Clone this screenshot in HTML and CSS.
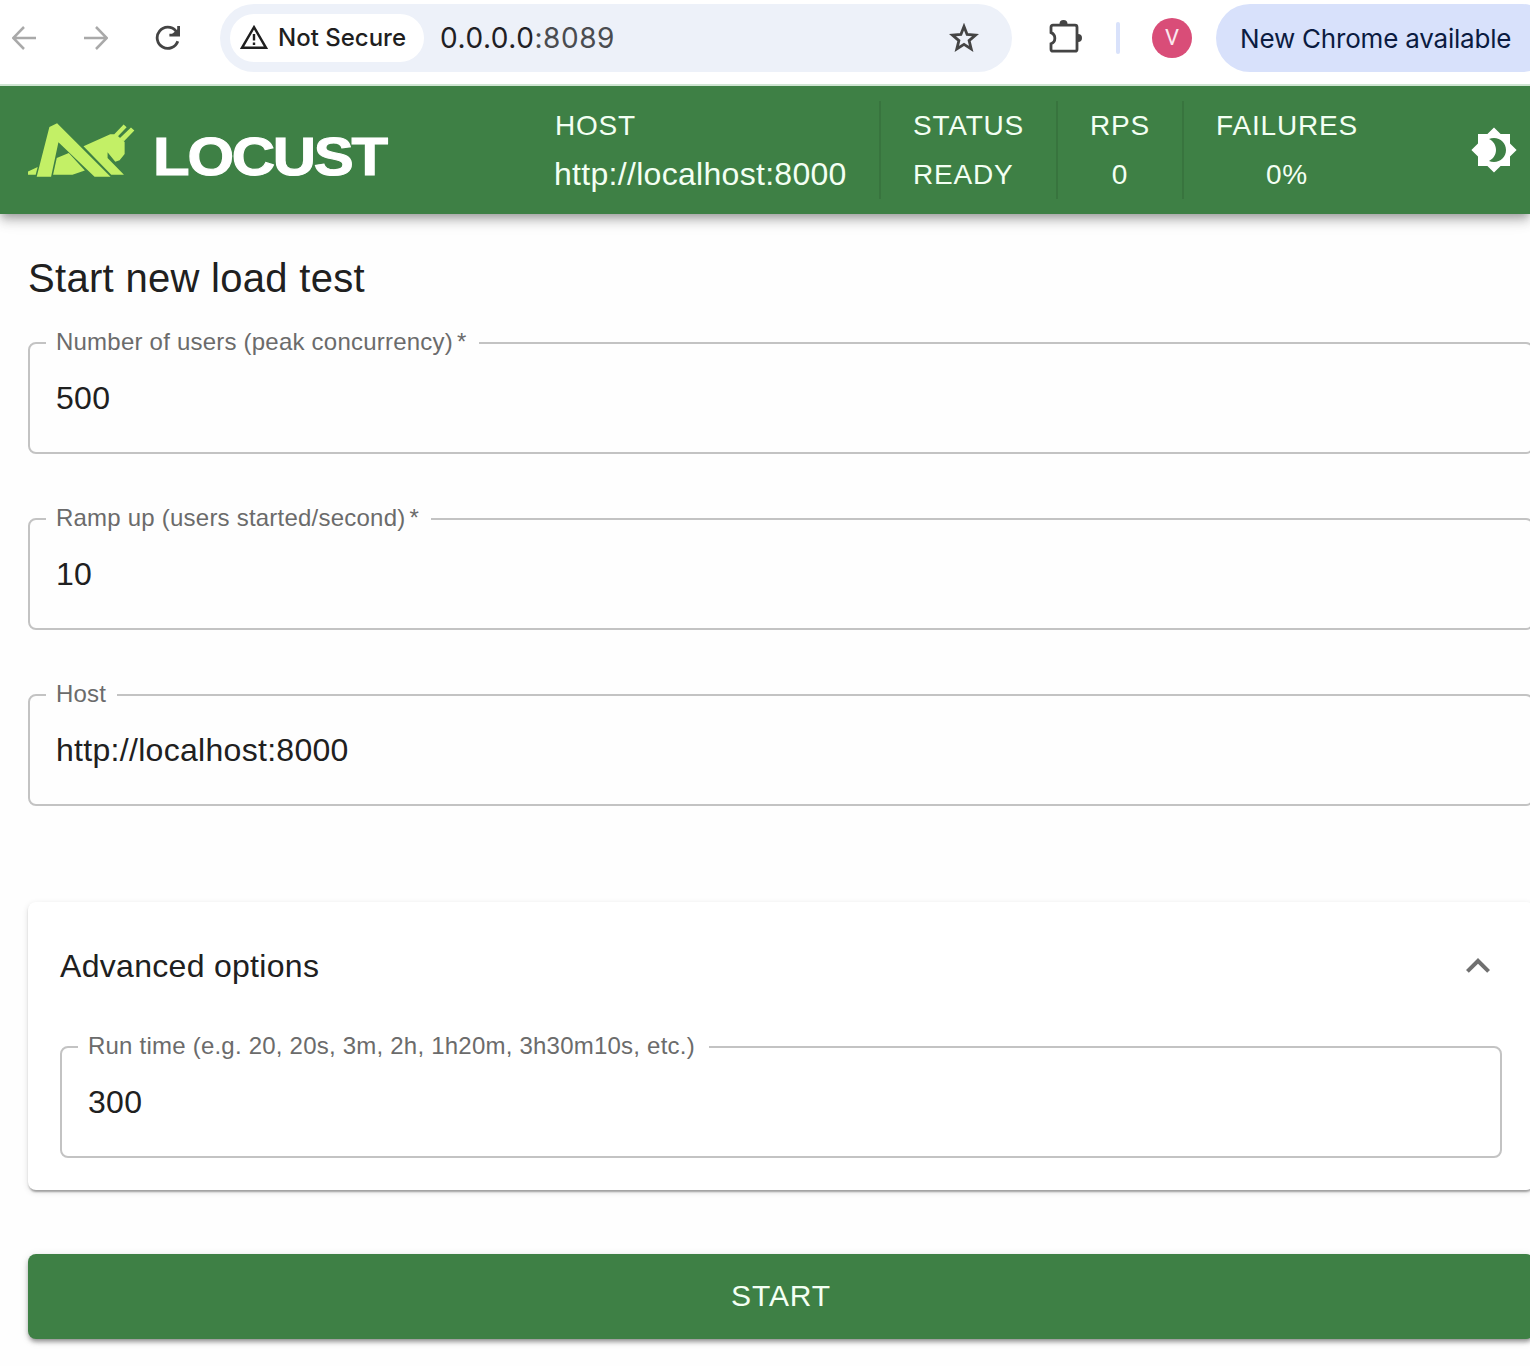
FILE: index.html
```html
<!DOCTYPE html>
<html lang="en">
<head>
<meta charset="utf-8">
<title>Locust</title>
<link rel="stylesheet" href="styles.css">
</head>
<body>
<div class="toolbar">
  <svg class="nav-icon back" viewBox="0 0 24 24"><path d="M24 12H1.5M12 1L1.2 12 12 23"/></svg>
  <svg class="nav-icon forward" viewBox="0 0 24 24"><path d="M0 12h22.5M12 1l10.800 11L12 23"/></svg>
  <svg class="reload" viewBox="0 0 26 26"><path class="arc" d="M22.800 16.200A10.600 10.600 0 1 1 20.800 5.800L23 9"/><path class="arc" d="M23.600 1v9.200h-9.200"/><path class="tip" d="M17 9l6-5v6z"/></svg>
  <div class="address">
    <div class="chip">
      <svg class="warn" viewBox="0 0 28 24"><path class="warn-line" d="M14 2.200L26 22.800H2z"/><path class="warn-mark" d="M14 9v6.500M14 17.500v2.600"/></svg>
      <span class="chip-text">Not Secure</span>
    </div>
    <span class="url">0.0.0.0<span class="port">:8089</span></span>
    <svg class="star" viewBox="0 0 30 30"><path d="M15 3.500l3.100 8 8.500.6-6.500 5.500 2.100 8.300-7.200-4.500-7.200 4.500 2.100-8.300-6.500-5.500 8.500-.6z"/></svg>
  </div>
  <svg class="puzzle" viewBox="0 0 34 34"><path class="puzzle-line" d="M5 6.200h22q2 0 2 2v22q0 2-2 2H5q-2 0-2-2v-5.400a6 6 0 0 0 0-11.200V8.200q0-2 2-2z"/><path class="puzzle-tab" d="M11.500 5.500v-.5a4 4 0 0 1 8 0v.5zM29.500 15h.5a4 4 0 0 1 0 8h-.5z"/></svg>
  <div class="toolbar-divider"></div>
  <div class="avatar">V</div>
  <div class="update"><span>New Chrome available</span></div>
</div>

<header class="appbar">
  <div class="logo">
    <svg class="logo-mark" viewBox="84 118 320 160">
      <path d="M84 272v-10l29-13-6 23zM159 272l11-50 36-15 48 52-37 13zM250 187l80-36 16-1 27 24v36l-15 19-13 4-23-28v17l49 50h-38zM342 151l28-29 9 8-28 29zM392 131l10 9-31 32-12-10z"/>
      <path d="M148 129l23-11 160 160h-48L175 175l-22 103h-43z"/>
    </svg>
    <svg class="logo-word" viewBox="0 0 244 70"><text x="1" y="60" textLength="233" lengthAdjust="spacingAndGlyphs">LOCUST</text></svg>
  </div>
  <div class="stats">
    <div class="stat host"><span class="label">HOST</span><span class="host-value">http://localhost:8000</span></div>
    <div class="stat status"><span class="label">STATUS</span><span class="value">READY</span></div>
    <div class="stat rps"><span class="label">RPS</span><span class="value">0</span></div>
    <div class="stat failures"><span class="label">FAILURES</span><span class="value">0%</span></div>
  </div>
  <svg class="theme" viewBox="0 0 24 24"><path d="M20 8.690V4h-4.690L12 .69 8.690 4H4v4.690L.69 12 4 15.310V20h4.690L12 23.310 15.310 20H20v-4.690L23.310 12 20 8.690zM12 18c-.89 0-1.740-.2-2.500-.55C11.560 16.500 13 14.420 13 12s-1.440-4.500-3.500-5.450C10.260 6.200 11.110 6 12 6c3.310 0 6 2.690 6 6s-2.690 6-6 6z"/></svg>
</header>

<main class="form">
  <h1 class="title">Start new load test</h1>
  <fieldset class="field"><legend>Number of users (peak concurrency)<span class="req">*</span></legend><div class="field-value">500</div></fieldset>
  <fieldset class="field"><legend>Ramp up (users started/second)<span class="req">*</span></legend><div class="field-value">10</div></fieldset>
  <fieldset class="field"><legend class="hostname">Host</legend><div class="field-value">http://localhost:8000</div></fieldset>
  <section class="card">
    <div class="card-head">
      <span>Advanced options</span>
      <svg class="chevron" viewBox="0 0 24 24"><path d="M12 8l-6 6 1.410 1.410L12 10.830l4.590 4.580L18 14z"/></svg>
    </div>
    <fieldset class="field"><legend class="runtime">Run time (e.g. 20, 20s, 3m, 2h, 1h20m, 3h30m10s, etc.)</legend><div class="field-value">300</div></fieldset>
  </section>
  <div class="start">START</div>
</main>
</body>
</html>
```
FILE: styles.css
```css
* { box-sizing: border-box; }
html { overflow: hidden; }
body {
  margin: 0;
  width: 1530px;
  height: 1366px;
  overflow: hidden;
  background: #fefefe;
  color: #202020;
  font-family: "Liberation Sans", Arial, sans-serif;
}
svg { display: block; flex: none; }

/* Browser toolbar, kept above the application bar's shadow */
.toolbar {
  position: relative;
  z-index: 1;
  display: flex;
  align-items: center;
  height: 86px;
  padding: 0 0 8px 12px;
  border-bottom: 2px solid #cfe5d2;
  background: #fff;
  font-family: Inter, sans-serif;
  white-space: nowrap;
  overflow: hidden;
}
.toolbar > * { flex: none; }
.nav-icon { width: 24px; height: 24px; fill: none; stroke: #a9a9a9; stroke-width: 2.5; }
.forward { margin-left: 48px; }
.reload { width: 26px; height: 26px; margin-left: 47px; }
.arc { fill: none; stroke: #444; stroke-width: 2.8; }
.tip { fill: #444; }
.address {
  display: flex;
  align-items: center;
  width: 792px;
  height: 68px;
  margin-left: 39px;
  padding: 0 33px 0 10px;
  border-radius: 34px;
  background: #edf1f9;
}
.chip {
  display: flex;
  align-items: center;
  width: 194px;
  height: 48px;
  padding-left: 10px;
  border-radius: 24px;
  background: #fff;
}
.warn { width: 28px; height: 24px; margin-top: -2px; }
.warn-line { fill: none; stroke: #1f1f1f; stroke-width: 2.4; }
.warn-mark { fill: none; stroke: #1f1f1f; stroke-width: 2.4; }
.chip-text { margin: -1px 0 0 10px; font-size: 24px; font-weight: 500; color: #1f1f1f; }
.url { flex: 1; margin-left: 16px; font-size: 28px; letter-spacing: .55px; color: #1f2024; }
.port { color: #4a4c50; }
.star { width: 30px; height: 30px; fill: none; stroke: #444; stroke-width: 2.8; }
.puzzle { width: 34px; height: 34px; margin: -4px 0 0 36px; }
.puzzle-line { fill: none; stroke: #444; stroke-width: 2.8; }
.puzzle-tab { fill: #444; }
.toolbar-divider { width: 4px; height: 32px; margin-left: 34px; border-radius: 2px; background: #d9e2fb; }
.avatar {
  width: 40px;
  height: 40px;
  margin-left: 32px;
  border-radius: 50%;
  background: #d94d78;
  color: #fbe9ef;
  font: 22px/40px Roboto, sans-serif;
  text-align: center;
}
.update {
  display: flex;
  align-items: center;
  width: 340px;
  height: 68px;
  margin-left: 24px;
  padding-left: 24px;
  border-radius: 34px;
  background: #d8e1fb;
  color: #0b1b41;
  font-size: 26px;
  letter-spacing: -.2px;
}

/* Application bar */
.appbar {
  display: flex;
  align-items: center;
  height: 128px;
  padding-left: 28px;
  background: #3e8045;
  color: #f3fff3;
  box-shadow: 0 4px 8px -2px rgba(0, 0, 0, .25), 0 8px 10px rgba(0, 0, 0, .14), 0 2px 20px rgba(0, 0, 0, .1);
}
.logo { display: flex; align-items: center; width: 527px; }
.logo-mark { width: 107px; height: 54px; fill: #c3f066; }
.logo-word { width: 244px; height: 70px; margin-left: 17px; }
.logo-word text {
  font: bold 54px "Liberation Sans", Arial, sans-serif;
  fill: #fff;
  stroke: #fff;
  stroke-width: 1.1px;
  letter-spacing: -2px;
}
.stats { display: flex; height: 98px; }
.stat {
  display: flex;
  flex-direction: column;
  align-items: center;
  padding-top: 5px;
  border-left: 2px solid #38743e;
  line-height: 40px;
  gap: 9px;
  font-size: 28px;
  white-space: nowrap;
}
.label, .value { letter-spacing: .8px; }
.host { width: 324px; align-items: flex-start; border: 0; }
.host-value { margin: -1px 0 0 -1px; font-size: 32px; letter-spacing: .3px; }
.status { width: 177px; padding-left: 32px; align-items: flex-start; }
.rps { width: 126px; }
.failures { width: 208px; }
.theme { width: 48px; height: 48px; margin-left: 80px; fill: #fff; }

/* Load test form */
.form { width: 1534px; padding: 40px 0 0 28px; }
.title { margin: 0 0 34px; font-size: 40px; font-weight: 400; line-height: 48px; letter-spacing: .3px; }
.field {
  min-width: 0;
  height: 126px;
  margin: 0 0 50px;
  padding: 0 0 0 16px;
  border: 2px solid #c3c3c3;
  border-radius: 8px;
}
.title + .field { margin-top: -8px; }
.field legend {
  height: 30px;
  padding: 0 12px 0 10px;
  color: #6b6b6b;
  font-size: 24px;
  line-height: 27px;
  letter-spacing: .22px;
}
.field .runtime { padding-right: 14px; }
.field .hostname { padding-right: 11px; }
.req { margin-left: 4px; }
.field-value { padding: 20px 0 0 10px; font-size: 32px; line-height: 40px; letter-spacing: .3px; }
.card {
  height: 288px;
  margin-top: 96px;
  padding: 40px 32px 0;
  border-radius: 8px;
  background: #fff;
  box-shadow: 0 4px 2px -2px rgba(0, 0, 0, .2), 0 2px 2px rgba(0, 0, 0, .14), 0 2px 6px rgba(0, 0, 0, .12);
}
.card-head { display: flex; align-items: center; justify-content: space-between; height: 48px; font-size: 32px; letter-spacing: .3px; }
.card .field { margin: 42px 0 0; }
.chevron { width: 48px; height: 48px; fill: #707070; }
.start {
  height: 85px;
  margin-top: 64px;
  border-radius: 8px;
  background: #3e8045;
  color: #f3fff3;
  font-size: 30px;
  line-height: 83px;
  letter-spacing: .86px;
  text-align: center;
  box-shadow: 0 4px 4px -2px rgba(0, 0, 0, .25), 0 3px 5px rgba(0, 0, 0, .2), 0 2px 10px rgba(0, 0, 0, .1);
}
```
